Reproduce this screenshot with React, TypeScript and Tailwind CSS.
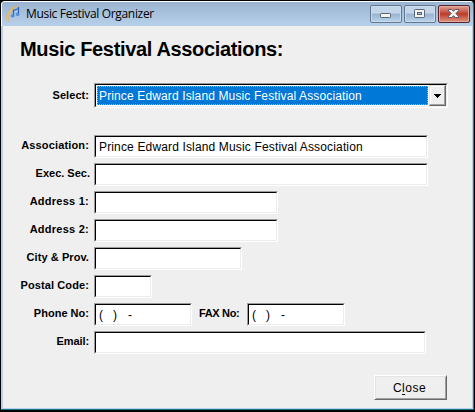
import type { ReactNode } from 'react';

function Sunken({ className, children }: { className: string; children?: ReactNode }) {
  return (
    <div className={`h-[23px] shrink-0 border border-t-[#9b9b9b] border-l-[#9b9b9b] border-r-white border-b-white ${className}`}>
      <div className="flex h-full w-full items-center overflow-hidden border border-t-black border-l-black border-r-[#ececec] border-b-[#ececec] bg-white pl-[3px] text-[12px] leading-[14px] whitespace-pre">
        {children}
      </div>
    </div>
  );
}

function Label({ text, spacing }: { text: string; spacing: string }) {
  return (
    <div className="flex w-[82px] shrink-0 justify-end pt-[3px] text-[11px] leading-[14px] font-bold whitespace-nowrap">
      <span className={spacing}>{text}</span>
    </div>
  );
}

function Row({ label, spacing, width, value }: { label: string; spacing: string; width: string; value?: string }) {
  return (
    <div className="flex h-[23px] gap-[5px]">
      <Label text={label} spacing={spacing} />
      <Sunken className={width}>{value && <span className="tracking-[0.15px]">{value}</span>}</Sunken>
    </div>
  );
}

function PhoneMask() {
  return (
    <span className="flex w-[36px]">
      <span className="w-[14px]">(</span>
      <span className="w-[15px]">)</span>
      <span>-</span>
    </span>
  );
}

function MusicIcon() {
  return (
    <svg width="16" height="18" viewBox="0 0 16 18" fill="none">
      <path d="M12.500 1C7 .8 .5 7 .3 12.500c-.1 2.700 1.500 4.300 4 3.700C2.400 15.300 1.800 13 3 10 4.500 6 8.500 2.800 12.500 1Z" fill="#f0bd60" stroke="#dca247" strokeWidth=".3" />
      <path d="M7.500 10.500V4.500M12.500 9V2M7.500 5.500l5-2" stroke="#2866c9" strokeWidth="1.200" />
      <ellipse cx="6.700" cy="10.900" rx="1.500" ry="1.200" fill="#5b98e8" stroke="#2866c9" strokeWidth=".5" />
      <ellipse cx="11.600" cy="9.400" rx="1.500" ry="1.200" fill="#5b98e8" stroke="#2866c9" strokeWidth=".5" />
    </svg>
  );
}

function MinimizeIcon() {
  return (
    <svg width="30" height="16" viewBox="0 0 30 16">
      <rect x="9.5" y="7.5" width="10" height="4" rx=".7" fill="#f5f3ee" stroke="#596579" />
    </svg>
  );
}

function MaximizeIcon() {
  return (
    <svg width="30" height="16" viewBox="0 0 30 16">
      <rect x="9.5" y="3.5" width="10" height="8" rx=".7" fill="#f5f3ee" stroke="#596579" />
      <rect x="12.5" y="6.5" width="4" height="2" fill="#a7bfdb" stroke="#596579" />
    </svg>
  );
}

function CloseIcon() {
  return (
    <svg width="30" height="16" viewBox="0 0 30 16">
      <path d="M9.500 3.500h3.300l1.700 1.800 1.700-1.800h3.300v1.300l-2.700 2.700 2.700 2.700v1.300h-3.300l-1.700-1.800-1.700 1.800h-3.300v-1.300l2.700-2.700-2.700-2.700Z" fill="#f5f3ee" stroke="#59596c" />
    </svg>
  );
}

export default function App() {
  return (
    <div className="h-[412px] w-[475px] overflow-hidden border-x border-t border-b-2 border-black bg-black font-['Liberation_Sans',Arial,sans-serif] text-black">
      <div className="flex h-[409px] w-[473px] flex-col rounded-t-[4px] border-t border-r border-b border-t-white border-r-[#28798c] border-b-[#167888] bg-[#b7cfe9]">
        <div className="flex h-[24px] shrink-0 justify-between rounded-t-[3px] border-l border-white bg-linear-to-b from-[#9ab3d0] to-[#b7d1eb] pr-[3px] pl-[4px]">
          <div className="flex">
            <div className="pt-[3px]"><MusicIcon /></div>
            <span className="ml-[4px] pt-[4px] font-['Open_Sans','Noto_Sans',sans-serif] text-[12px] leading-[16px] tracking-[-0.32px]">Music Festival Organizer</span>
          </div>
          <div className="flex gap-[2px] pt-[3px]">
            <div className="h-[18px] w-[32px] rounded-[2px] border border-[#65778f] bg-linear-to-b from-[#c3d5e8] from-45% via-[#98b3d1] via-50% to-[#b9d4eb] shadow-[inset_0_0_0_1px_#c9dced]"><MinimizeIcon /></div>
            <div className="h-[18px] w-[32px] rounded-[2px] border border-[#65778f] bg-linear-to-b from-[#c3d5e8] from-45% via-[#98b3d1] via-50% to-[#b9d4eb] shadow-[inset_0_0_0_1px_#c9dced]"><MaximizeIcon /></div>
            <div className="h-[18px] w-[32px] rounded-[2px] border border-[#54232c] bg-linear-to-b from-[#dfa096] from-0% via-[#bb3b27] via-50% to-[#dc9280] shadow-[inset_0_0_0_1px_#e4a99c]"><CloseIcon /></div>
          </div>
        </div>

        <main className="mr-px mb-px ml-[2px] flex grow flex-col bg-[#efefef] pl-1">
          <h1 className="ml-[13px] pt-[12px] text-[20px] leading-[23px] font-bold tracking-[-0.34px] whitespace-nowrap">Music Festival Associations:</h1>
          <div className="mt-[22px] flex h-[25px] gap-[5px]">
            <div className="pt-[2px]"><Label text="Select:" spacing="tracking-[0.05px]" /></div>
            <div className="flex h-[25px] w-[354px] border border-t-[#9b9b9b] border-l-[#9b9b9b] border-r-white border-b-white">
              <div className="flex w-full border border-t-black border-l-black border-r-[#ececec] border-b-[#ececec] bg-white">
                <div className="m-px flex h-[19px] w-[331px] items-center border border-dotted border-[#eba06b] bg-[#0078d7] pl-px text-[12px] leading-[14px] tracking-[0.13px] whitespace-nowrap text-white">Prince Edward Island Music Festival Association</div>
                <div className="flex h-[21px] w-[17px] items-center justify-center border border-t-[#e3e3e3] border-l-[#e3e3e3] border-r-[#696969] border-b-[#696969] bg-[#efefef] shadow-[inset_-1px_-1px_0_#a0a0a0,inset_1px_1px_0_#fff]">
                  <svg width="7" height="4" viewBox="0 0 7 4" shapeRendering="crispEdges"><path d="M0 0h7v1H6v1H5v1H4v1H3V3H2V2H1V1H0Z" /></svg>
                </div>
              </div>
            </div>
          </div>

          <div className="mt-[27px] flex flex-col gap-[5px]">
            <Row label="Association:" spacing="tracking-[0.15px]" width="w-[334px]" value="Prince Edward Island Music Festival Association" />
            <Row label="Exec. Sec." spacing="-mr-px tracking-[0px]" width="w-[334px]" />
            <Row label="Address 1:" spacing="tracking-[0.25px]" width="w-[184px]" />
            <Row label="Address 2:" spacing="tracking-[0.25px]" width="w-[184px]" />
            <Row label="City & Prov." spacing="tracking-[0.08px]" width="w-[148px]" />
            <Row label="Postal Code:" spacing="tracking-[0.1px]" width="w-[58px]" />
            <div className="flex h-[23px]">
              <Label text="Phone No:" spacing="tracking-[0.02px]" />
              <Sunken className="ml-[5px] w-[98px]"><PhoneMask /></Sunken>
              <span className="ml-[7px] w-[48px] pt-[3px] text-[11px] leading-[14px] font-bold tracking-[-0.35px] whitespace-nowrap">FAX No:</span>
              <Sunken className="w-[98px]"><PhoneMask /></Sunken>
            </div>
            <Row label="Email:" spacing="tracking-[-0.1px]" width="w-[332px]" />
          </div>

          <button className="mt-[21px] mr-[25px] h-[25px] w-[73px] self-end border border-t-white border-l-white border-r-[#696969] border-b-[#696969] bg-[#efefef] pr-[2px] text-[12px] leading-[20px] tracking-[0.5px] shadow-[inset_1px_1px_0_#e3e3e3,inset_-1px_-1px_0_#a0a0a0]">C<span className="underline underline-offset-2">l</span>ose</button>
        </main>
      </div>
    </div>
  );
}
